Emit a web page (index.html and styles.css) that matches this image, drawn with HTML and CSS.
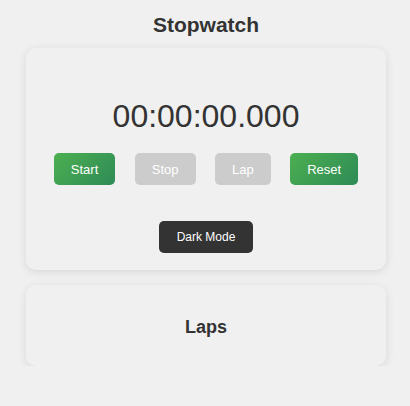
FILE: index.html
```
<!DOCTYPE html>
<html><head><link rel="stylesheet" href="styles.css"></head>
<body>
<h1 class="title">Stopwatch</h1>
<div class="card main">
  <div class="timer">00:00:00.000</div>
  <div class="controls">
    <button class="btn green">Start</button>
    <button class="btn gray">Stop</button>
    <button class="btn gray">Lap</button>
    <button class="btn green">Reset</button>
  </div>
  <button class="btn dark">Dark Mode</button>
</div>
<div class="card laps">
  <h2 class="laps-title">Laps</h2>
</div>
</body></html>
```
FILE: styles.css
```
body{margin:0;padding:0 24px 0 26px;background:#f0f0f0;color:#333;font-family:"Liberation Sans",Arial,sans-serif;display:flex;flex-direction:column;align-items:center}
.title{font-size:21px;line-height:26px;margin:12px 0 10px;font-weight:bold}
.card{width:360px;box-sizing:border-box;background:#f0f0f0;border-radius:10px;box-shadow:0 2px 10px rgba(0,0,0,0.1);display:flex;flex-direction:column;align-items:center}
.main{padding:50px 20px 17px}
.timer{font-size:32px;line-height:37px;height:37px}
.controls{display:flex;gap:19.5px;margin-top:18px}
.btn{font-family:"Liberation Sans",Arial,sans-serif;font-size:13px;height:32px;padding:0 17px;border:none;border-radius:5px;color:#fff;cursor:pointer}
.green{background:linear-gradient(135deg,#4caf50,#2e8b57)}
.gray{background:#ccc}
.dark{background:#333;margin-top:36px;font-size:12px;padding:0 18px}
.laps{margin-top:15px;padding:20px}
.laps-title{font-size:18px;line-height:21px;margin:12px 0 8px}
```
